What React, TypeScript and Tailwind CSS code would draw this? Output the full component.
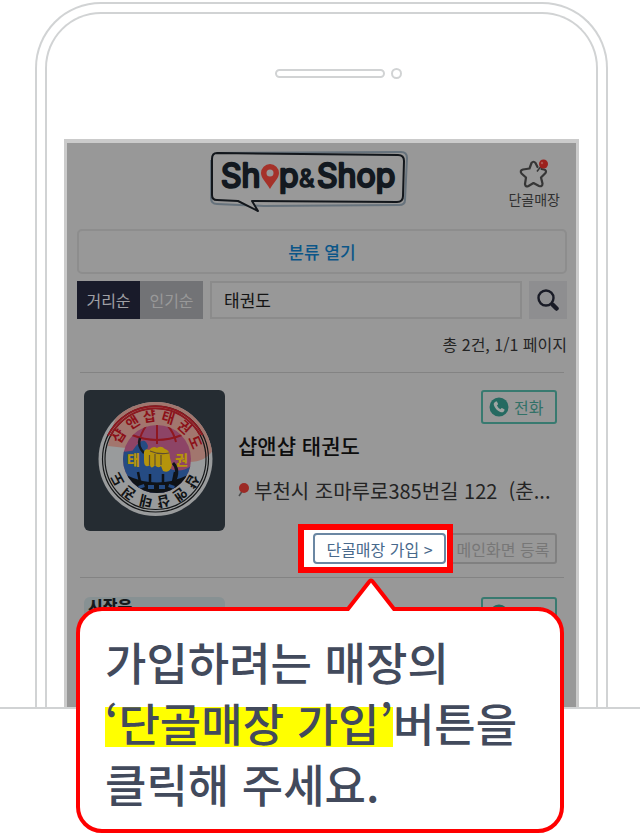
import type { ReactNode } from "react";

// 엠블럼 테두리 글자와 각도 (12시 방향 기준, 시계 방향)
const RING_TOP: [string, number][] = [
  ["샵", -58],
  ["앤", -32],
  ["샵", -8],
  ["태", 17],
  ["권", 42],
  ["도", 67],
];

const RING_BOTTOM: [string, number][] = [
  ["샵", 121],
  ["앤", 145],
  ["샵", 169],
  ["태", 193],
  ["권", 218],
  ["도", 242],
];

function Logo() {
  return (
    <svg viewBox="0 0 200 66" className="h-[66px] w-[200px]" role="img" aria-label="Shop&Shop">
      <path
        d="M8 3 L192 2 Q198 2 198 8 L196 50 Q196 55 190 55 L55 56 L8 54 Q2 54 2 48 L2 10"
        fill="none"
        stroke="#66727c"
        strokeWidth="2"
      />
      <path
        d="M8 3 L189 5 Q195 5 195 11 L194 46 Q194 52 188 52 L43 51 L49 61 L29 51 L8 50 Q3 50 3 45 L3 9 Q3 3 8 3 Z"
        fill="#999999"
        stroke="#12161b"
        strokeWidth="2"
        strokeLinejoin="round"
      />
      <g
        fill="#131920"
        stroke="#131920"
        strokeWidth="2.400"
        strokeLinejoin="round"
        fontFamily="Inter, 'Liberation Sans', sans-serif"
        fontWeight="400"
        fontSize="32"
      >
        <text x="12" y="37">Sh</text>
        <text x="70" y="37">p</text>
        <text x="90" y="37" fontSize="24" strokeWidth="1.500">&amp;</text>
        <text x="108" y="37">Shop</text>
      </g>
      <path d="M61 39 C57 32 52 28 52 23 A9 9 0 0 1 70 23 C70 28 65 32 61 39 Z" fill="#a5322a" />
      <circle cx="61" cy="23" r="3.500" fill="#999999" />
    </svg>
  );
}

function StarIcon() {
  return (
    <svg viewBox="0 0 30 30" className="h-[30px] w-[30px]" aria-hidden="true">
      <path
        d="M18.500 8 L16.500 4 Q14.500 1.500 12.500 4 L10.500 9.500 L4 10.500 Q0.500 11.500 2.500 14.500 L7 18.500 L6 25 Q6.500 28.500 9.500 27 L14.500 24 L20 27 Q23.500 28 23.500 24.500 L22 18.500 L26.500 14 Q28 11.500 25 10.500 L22.500 10"
        fill="none"
        stroke="#363636"
        strokeWidth="2.200"
        strokeLinecap="round"
        strokeLinejoin="round"
      />
      <path d="M18 12.500 L23 6" stroke="#363636" strokeWidth="1.500" />
      <circle cx="24.500" cy="5" r="4.500" fill="#9c211d" />
      <circle cx="23" cy="4" r="1.200" fill="#b0544f" />
    </svg>
  );
}

function SearchIcon() {
  return (
    <svg viewBox="0 0 22 22" className="h-[22px] w-[22px]" aria-hidden="true">
      <circle cx="9" cy="9" r="7.500" fill="none" stroke="#191b26" strokeWidth="2.400" />
      <path d="M14 14.500 L15.500 16" stroke="#191b26" strokeWidth="3" />
      <path d="M16 16 L19.500 19.500" stroke="#191b26" strokeWidth="4.500" strokeLinecap="round" />
    </svg>
  );
}

function CallIcon() {
  return (
    <svg viewBox="0 0 20 20" className="h-5 w-5" aria-hidden="true">
      <circle cx="10" cy="10" r="9.500" fill="#256a61" />
      <path
        d="M5.200 5.800 L6.800 4.400 Q7.500 4 8 4.800 L9 6.700 Q9.200 7.300 8.700 7.700 L7.900 8.500 Q9 10.900 11.400 12.200 L12.300 11.300 Q12.800 10.900 13.400 11.200 L15.200 12.300 Q15.900 12.800 15.400 13.500 L14.300 14.900 Q13.300 15.800 11.200 14.900 Q6.500 12.900 4.800 8 Q4.500 6.700 5.200 5.800 Z"
        fill="#a0a5a3"
      />
    </svg>
  );
}

function PinIcon() {
  return (
    <svg viewBox="0 0 12 16" className="h-4 w-3 shrink-0" aria-hidden="true">
      <path d="M5 7 L1 13" stroke="#4d4d4d" strokeWidth="1.500" />
      <circle cx="6" cy="5" r="5" fill="#9c2a25" />
    </svg>
  );
}

function RingText({ letters, fill }: { letters: [string, number][]; fill: string }) {
  return (
    <g fill={fill} fontWeight="700" fontSize="14" textAnchor="middle">
      {letters.map(([letter, angle]) => (
        <text key={angle} x="71.500" y="31" transform={`rotate(${angle} 71.500 69)`}>
          {letter}
        </text>
      ))}
    </g>
  );
}

// 태권도장 엠블럼
function Emblem() {
  return (
    <svg viewBox="0 0 141 141" className="h-full w-full" role="img" aria-label="샵앤샵 태권도 로고">
      <defs>
        <clipPath id="disc">
          <circle cx="71.500" cy="69" r="57" />
        </clipPath>
        <clipPath id="globe">
          <circle cx="73" cy="69" r="34" />
        </clipPath>
      </defs>
      <circle cx="71.500" cy="69" r="57" fill="#999b9c" />
      <g clipPath="url(#disc)">
        <path d="M24 56 Q30 18 50 8 L100 4 L134 45 Q130 72 105 72 L60 60 Z" fill="#a2766e" />
      </g>
      <g fill="none" strokeWidth="1.200">
        <g stroke="#151718">
          <circle cx="71.500" cy="69" r="53" />
          <circle cx="71.500" cy="69" r="50.500" />
        </g>
        <g stroke="#8f1820" strokeWidth="1.800">
          <path d="M24 45.500 A53 53 0 0 1 118.500 45" />
          <path d="M26.500 46 A50.500 50.500 0 0 1 116 45" />
        </g>
      </g>
      <g clipPath="url(#globe)">
        <rect x="39" y="35" width="68" height="68" fill="#8d4466" />
        <path d="M39 62 Q50 60 60 60 Q68 72 84 78 Q96 84 107 76 V103 H39 Z" fill="#254b83" />
        <path d="M42 85 Q73 100 104 85 V103 H42 Z" fill="#0f1216" />
        <g fill="none" stroke="#8f1820" strokeWidth="2">
          <path d="M48 45 Q73 55 98 45" />
          <path d="M62 36 Q57 43 55 52" />
          <path d="M73 35 V54" />
          <path d="M84 36 Q90 43 92 52" />
        </g>
        <g fill="none" stroke="#254b83" strokeWidth="6">
          <path d="M57 95 L58 98" />
          <path d="M67 95 V99" />
          <path d="M78 95 V99" />
          <path d="M88 95 L87 98" />
        </g>
        <g fill="none" stroke="#0f1216" strokeWidth="2.500">
          <path d="M54 82 L56 92" />
          <path d="M66 84 V94" />
          <path d="M79 84 V94" />
          <path d="M91 82 L89 92" />
        </g>
      </g>
      <path d="M40 61 Q47 69 49 60 Q60 44 64 56 L60 74 H42 Z" fill="#254b83" />
      <path d="M56 48 Q53 56 60 63" fill="none" stroke="#161a20" strokeWidth="2.500" />
      <path d="M89 73 Q96 80 90 92" fill="none" stroke="#10141a" strokeWidth="3" />
      <path
        d="M60 62 Q61 58 65 60 Q69 55 73 58 Q77 55 81 59 Q86 60 86 68 L88 75 Q86 84 79 81 L77 76 Q74 79 71 75 Q67 80 66 75 Q60 79 60 70 Z"
        fill="#b5940b"
      />
      <path
        d="M65.500 65 V75 M71 64 V75 M77 65 V75 M66 61 Q75 65 85 63"
        fill="none"
        stroke="#5e4d32"
        strokeWidth="1.200"
      />
      <g fontWeight="900" fontSize="14" fill="#b5940b">
        <text x="43" y="75">태</text>
        <text x="91" y="75">권</text>
      </g>
      <RingText letters={RING_TOP} fill="#8c1018" />
      <RingText letters={RING_BOTTOM} fill="#111315" />
    </svg>
  );
}

function CallButton() {
  return (
    <button
      type="button"
      className="flex h-[34px] w-[76px] shrink-0 items-center gap-[5px] rounded-[3px] border-2 border-[#387a70] pl-[6px] text-base leading-6 text-[#327167]"
    >
      <CallIcon />
      전화
    </button>
  );
}

function Thumbnail({ children, className }: { children: ReactNode; className: string }) {
  return (
    <div className={`h-[141px] w-[141px] shrink-0 overflow-hidden rounded-md ${className}`}>{children}</div>
  );
}

function ShopCard() {
  return (
    <article className="flex items-start gap-[13px] border-t border-[#838383] pt-[17px] pr-[7px] pb-1 pl-1">
      <Thumbnail className="bg-[#252c32]">
        <Emblem />
      </Thumbnail>
      <div className="flex min-w-0 flex-1 flex-col">
        <div className="flex justify-end">
          <CallButton />
        </div>
        <h2 className="mt-[7px] text-[21px] leading-7 font-medium text-[#0d0d0d]">샵앤샵 태권도</h2>
        <p className="mt-[18px] flex items-center gap-1 text-xl leading-7 whitespace-pre text-[#242424]">
          <PinIcon />
          부천시 조마루로385번길 122{"  "}(춘...
        </p>
        <div className="mt-[19px] flex items-center justify-end">
          <div className="relative border-[6px] border-[#ff0000] bg-white py-[3px] pr-px pl-[9px]">
            <button
              type="button"
              className="h-[31px] w-[133px] rounded-[4px] border-2 border-[#6b87a3] text-base leading-6 whitespace-nowrap text-[#48698c]"
            >
              단골매장 가입 &gt;
            </button>
          </div>
          <button
            type="button"
            className="-ml-1 h-[31px] w-[108px] rounded-[3px] border-2 border-[#808080] text-base leading-6 whitespace-nowrap text-[#777777]"
          >
            메인화면 등록
          </button>
        </div>
      </div>
    </article>
  );
}

function NextShopCard() {
  return (
    <article className="flex h-[130px] items-start justify-between overflow-hidden border-t border-[#838383] pt-[19px] pr-[7px] pl-1">
      <Thumbnail className="bg-[#879193] pl-1">
        <strong className="block text-base leading-4 font-black text-[#15191b]">시장은</strong>
      </Thumbnail>
      <CallButton />
    </article>
  );
}

function ShopScreen() {
  return (
    <div className="mx-[17px] mt-[60px] border-x-[3px] border-t-4 border-[#cbcbcb] bg-[#989898] pr-[9px] pl-[10px]">
      <header className="grid grid-cols-[5fr_auto_6fr] items-start pt-[7px]">
        <span />
        <Logo />
        <a
          href="#favorites"
          className="mr-[7px] flex flex-col items-center justify-self-end pt-[9px] text-sm leading-5 text-[#303030]"
        >
          <StarIcon />
          단골매장
        </a>
      </header>

      <button
        type="button"
        className="mt-[13px] h-[45px] w-full rounded-[5px] border-2 border-[#8d8d8d] text-[17px] leading-6 font-medium text-[#0b5688]"
      >
        분류 열기
      </button>

      <form className="mt-[7px] flex h-[38px] gap-[7px] text-base" onSubmit={(e) => e.preventDefault()}>
        <div className="flex">
          <button type="button" className="w-[63px] bg-[#191b2a] text-[#a0a0a5]">
            거리순
          </button>
          <button type="button" className="w-[63px] bg-[#727376] text-[#999999]">
            인기순
          </button>
        </div>
        <input
          type="text"
          aria-label="매장 검색"
          defaultValue="태권도"
          className="min-w-0 flex-1 border-2 border-[#8b8b8b] px-3 text-[17px] text-[#141414] outline-none"
        />
        <button type="submit" aria-label="검색" className="flex w-[38px] items-center justify-center bg-[#8e8e90]">
          <SearchIcon />
        </button>
      </form>

      <p className="mt-[13px] mb-4 text-right text-base leading-6 text-[#242424]">총 2건, 1/1 페이지</p>

      <div className="mx-[3px]">
        <ShopCard />
        <NextShopCard />
      </div>
    </div>
  );
}

function Callout() {
  return (
    <aside className="relative mx-[76px] -mt-[102px] rounded-[26px] border-4 border-[#ff0000] bg-white pt-5 pr-4 pb-[15px] pl-[25px]">
      <svg viewBox="0 0 50 34" className="absolute -top-[34px] left-[266px] h-[34px] w-[50px]" aria-hidden="true">
        <path d="M1 34 L25 4 L49 34 Z" fill="#ffffff" />
        <path d="M0 32 H2 L23 5 Q25 2 27 5 L48 32 H50" fill="none" stroke="#ff0000" strokeWidth="4" />
      </svg>
      <p className="text-[45px] leading-[61px] font-medium whitespace-nowrap text-[#424a5c]">
        가입하려는 매장의
        <br />
        <mark className="bg-transparent bg-[linear-gradient(transparent_17px,#ffff00_17px,#ffff00_57px,transparent_57px)] text-inherit">
          ‘단골매장 가입’
        </mark>
        버튼을
        <br />
        클릭해 주세요.
      </p>
    </aside>
  );
}

export default function App() {
  return (
    <main
      lang="ko"
      className="min-w-[640px] overflow-hidden bg-white font-['Noto_Sans_CJK_KR',sans-serif]"
    >
      <section className="border-b-2 border-[#d1d3d4] pt-[2px] pr-8 pl-[35px]">
        <div className="rounded-t-[66px] border-2 border-b-0 border-[#d1d3d4] px-2 pt-2">
          <div className="rounded-t-[56px] border-2 border-b-0 border-[#d1d3d4] pt-[54px]">
            <div className="flex items-center justify-center gap-[6px] pl-[34px]">
              <span className="h-[9px] w-[110px] rounded-full border-2 border-[#d1d3d4]" />
              <span className="h-[11px] w-[11px] rounded-full border-2 border-[#d1d3d4]" />
            </div>
            <ShopScreen />
          </div>
        </div>
      </section>
      <Callout />
    </main>
  );
}
